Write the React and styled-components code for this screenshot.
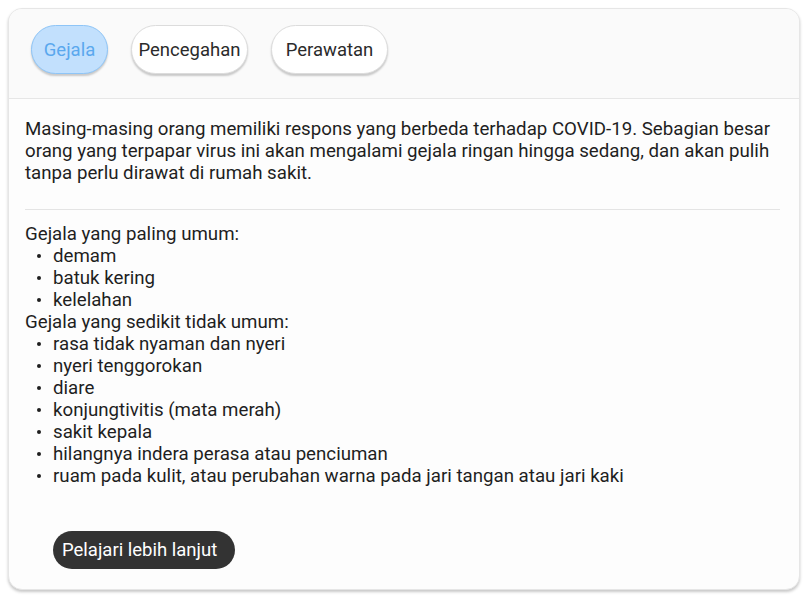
import styled, { createGlobalStyle } from "styled-components";

const GlobalStyle = createGlobalStyle`
    body {
        margin: 0;
        background: #ffffff;
        font-family: Roboto, "Noto Sans", sans-serif;
    }
`

const tabs = [
    { label: 'Gejala', width: 77 },
    { label: 'Pencegahan', width: 117 },
    { label: 'Perawatan', width: 117 },
]

const common = ['demam', 'batuk kering', 'kelelahan']
const lessCommon = [
    'rasa tidak nyaman dan nyeri',
    'nyeri tenggorokan',
    'diare',
    'konjungtivitis (mata merah)',
    'sakit kepala',
    'hilangnya indera perasa atau penciuman',
    'ruam pada kulit, atau perubahan warna pada jari tangan atau jari kaki',
]

export default function App() {

    const active = 'Gejala'

    return (
        <Page>
            <GlobalStyle />
            <Card>
                <Header>
                    {tabs.map(t => (
                        <Tab key={t.label} width={t.width} active={t.label === active}>{t.label}</Tab>
                    ))}
                </Header>

                <Body>
                    <Intro>
                        Masing-masing orang memiliki respons yang berbeda terhadap COVID-19. Sebagian besar orang yang terpapar virus ini akan mengalami gejala ringan hingga sedang, dan akan pulih tanpa perlu dirawat di rumah sakit.
                    </Intro>

                    <Divider />

                    <Section>
                        <div>Gejala yang paling umum:</div>
                        <List>
                            {common.map(i => <li key={i}>{i}</li>)}
                        </List>
                        <div>Gejala yang sedikit tidak umum:</div>
                        <List>
                            {lessCommon.map(i => <li key={i}>{i}</li>)}
                        </List>
                    </Section>

                    <MoreButton>Pelajari lebih lanjut</MoreButton>
                </Body>
            </Card>
        </Page>
    )
}

const Page = styled.div`
    padding: 8px;
    box-sizing: border-box;
    width: 808px;
    height: 598px;
`

const Card = styled.div`
    width: 792px;
    height: 582px;
    box-sizing: border-box;
    border: 1px solid #e6e6e6;
    border-radius: 14px;
    background-color: #fdfdfd;
    box-shadow: 0 2px 3px rgba(0,0,0,0.22);
    overflow: hidden;
    display: flex;
    flex-direction: column;
`

const Header = styled.div`
    display: flex;
    align-items: center;
    gap: 23px;
    height: 90px;
    box-sizing: border-box;
    padding: 0 22px 8px 22px;
    background-color: #fafafa;
    border-bottom: 1px solid #e6e6e6;
`

const Tab = styled.div`
    width: ${p => p.width}px;
    height: 49px;
    box-sizing: border-box;
    display: flex;
    align-items: center;
    justify-content: center;
    white-space: nowrap;
    border-radius: 25px;
    font-size: 18.5px;
    color: ${p => p.active ? '#5aa8ee' : '#2b2b2b'};
    background-color: ${p => p.active ? '#c2e0fd' : '#ffffff'};
    border: 1px solid ${p => p.active ? '#8ec5f7' : '#dcdcdc'};
    box-shadow: 0 2px 2px rgba(0,0,0,0.2);
    cursor: pointer;
`

const Body = styled.div`
    padding: 19px 19px 0 16px;
    color: #1f1f1f;
    font-size: 18.7px;
    line-height: 22px;
`

const Intro = styled.p`
    margin: 0;
`

const Divider = styled.div`
    height: 1px;
    background-color: #e4e4e4;
    margin: 25px 0 13px 0;
`

const Section = styled.div`
    line-height: 22px;
`

const List = styled.ul`
    margin: 0;
    padding: 0 0 0 12px;
    list-style: none;

    li{
        display: flex;
        align-items: center;
        height: 22px;
    }

    li::before{
        content: '';
        width: 4px;
        height: 4px;
        border-radius: 50%;
        background-color: #1f1f1f;
        margin-right: 12px;
        flex-shrink: 0;
    }
`

const MoreButton = styled.button`
    margin: 44px 0 0 28px;
    width: 182px;
    height: 38px;
    padding: 0 0 0 9px;
    text-align: left;
    border: none;
    border-radius: 19px;
    background-color: #333333;
    color: #ffffff;
    font-family: Roboto, "Noto Sans", sans-serif;
    font-size: 18.5px;
    cursor: pointer;
`
